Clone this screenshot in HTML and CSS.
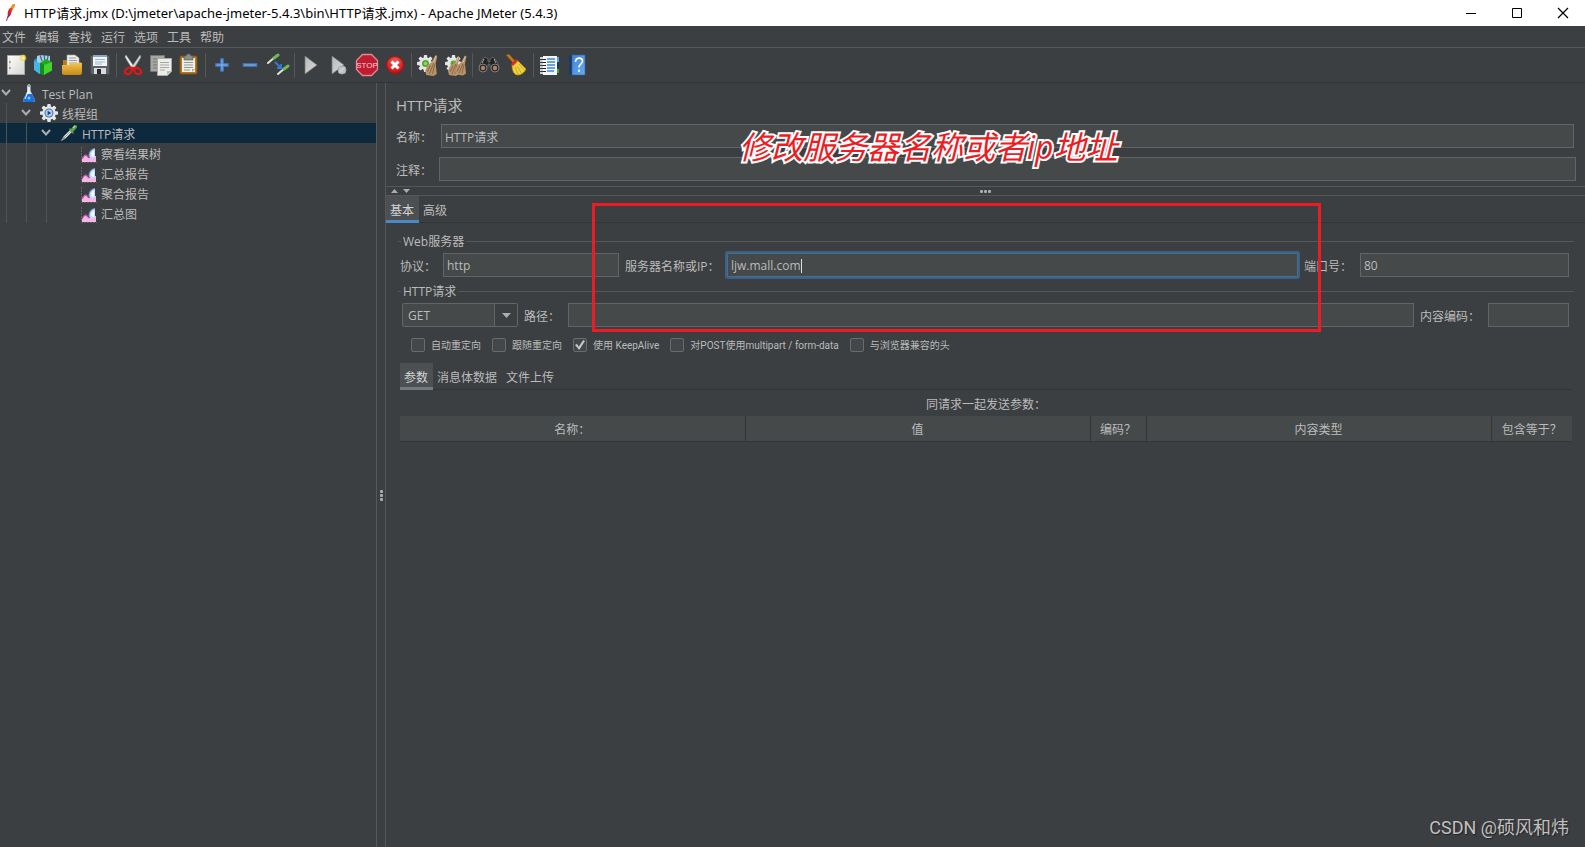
FILE: index.html
```html
<!DOCTYPE html>
<html lang="zh-CN">
<head>
<meta charset="utf-8">
<title>Apache JMeter (5.4.3)</title>
<link rel="stylesheet" href="styles.css">
</head>
<body>
<svg class="defs" aria-hidden="true">
  <defs>
    <linearGradient id="gFolder" x1="0" y1="0" x2="0" y2="1"><stop offset="0" stop-color="#f3c252"/><stop offset="1" stop-color="#c88a16"/></linearGradient>
    <linearGradient id="gPaper" x1="0" y1="0" x2="1" y2="1"><stop offset="0" stop-color="#ffffff"/><stop offset="1" stop-color="#d4d4d0"/></linearGradient>
    <linearGradient id="gPlay" x1="0" y1="0" x2="1" y2="1"><stop offset="0" stop-color="#b9b9b9"/><stop offset="1" stop-color="#d9d9d9"/></linearGradient>
    <linearGradient id="gBook" x1="0" y1="0" x2="1" y2="1"><stop offset="0" stop-color="#3f82d4"/><stop offset="1" stop-color="#6aabf0"/></linearGradient>
    <radialGradient id="gRed" cx=".5" cy=".3" r=".7"><stop offset="0" stop-color="#f46060"/><stop offset="1" stop-color="#c40a0a"/></radialGradient>
    <radialGradient id="gSun"><stop offset="0" stop-color="#fffbd0"/><stop offset=".5" stop-color="#f2dc50"/><stop offset="1" stop-color="#f2dc50" stop-opacity="0"/></radialGradient>
    <symbol id="gear" viewBox="0 0 20 20">
      <g fill="#e4e6e8"><circle cx="10" cy="10" r="7.500"/><rect x="8" y="0" width="4" height="20" rx="1"/><rect x="0" y="8" width="20" height="4" rx="1"/><g transform="rotate(45 10 10)"><rect x="8" y="0" width="4" height="20" rx="1"/><rect x="0" y="8" width="20" height="4" rx="1"/></g></g>
    </symbol>
    <symbol id="brush" viewBox="0 0 12 20">
      <path d="M10 0l1.500 1-1.500 7 1 10-3 2-7-1-1-4 2-5 4-3z" fill="#b8936a"/><path d="M8 8l-4 10M9 9l-2 9M5 10l-3 6" stroke="#7d5e3c" stroke-width=".8" fill="none"/><path d="M10 1l-2 6" stroke="#dcbf90"/>
    </symbol>
    <symbol id="chart" viewBox="0 0 18 18">
      <path d="M1.500 1v15.500H17" fill="none" stroke="#606068" stroke-dasharray="2 1"/><path d="M2 16v-3l2-3 2-1 3 3 3-2h4v6z" fill="#f5b6e6"/><path d="M2 13l2-3 2-1 3 3" fill="none" stroke="#c457aa" stroke-width="1.200"/><path d="M9 10c0-4 2-7 6-7.500V12c-3 1-5 0-6-2z" fill="#c3daf8"/><path d="M9 10c0-4 2-7 6-7.500" fill="none" stroke="#6b92ca"/><path d="M11 9c0-2 1-4 3-4v6c-1 0-3-1-3-2z" fill="#f4f9ff"/>
    </symbol>
    <symbol id="chevron" viewBox="0 0 12 12"><path d="M2 3l4 4.500 4-4.500" fill="none" stroke="#adadad" stroke-width="2"/></symbol>
  </defs>
</svg>

<header class="titlebar">
  <svg class="feather" viewBox="0 0 20 20"><path d="M14 2c2 0 1 2 0 4l-2 2-2-1c1-3 2-5 4-5z" fill="#f09028"/><path d="M10 6l2.500 1-2 6-2.500 1c-1-3 0-6 2-8z" fill="#d02030"/><path d="M10.500 6l2 1-1 3-2-1z" fill="#e04428"/><path d="M8 12l2.500 1-2 2.500-1 .5z" fill="#8a2470"/><path d="M8 14l-1.500 5" stroke="#a03060" fill="none"/></svg>
  <h1 class="title">HTTP请求.jmx (D:\jmeter\apache-jmeter-5.4.3\bin\HTTP请求.jmx) - Apache JMeter (5.4.3)</h1>
  <div class="window-buttons">
    <button aria-label="最小化"><svg viewBox="0 0 12 12"><path d="M1 6.500h10" stroke="#000"/></svg></button>
    <button aria-label="最大化"><svg viewBox="0 0 12 12"><path d="M1.500 1.500h9v9h-9z" fill="none" stroke="#000"/></svg></button>
    <button aria-label="关闭"><svg viewBox="0 0 12 12"><path d="M1 1l10 10M11 1L1 11" stroke="#000" stroke-width="1.200"/></svg></button>
  </div>
</header>

<nav class="menubar">
  <button>文件</button><button>编辑</button><button>查找</button><button>运行</button><button>选项</button><button>工具</button><button>帮助</button>
</nav>

<div class="toolbar" role="toolbar">
  <button aria-label="新建"><svg viewBox="0 0 24 24"><path d="M3.500 2.500h17v19h-17z" fill="url(#gPaper)" stroke="#a9a9a0"/><path d="M5.500 4v16" stroke="#ddd"/><circle cx="6" cy="9" r=".8" fill="#555"/><circle cx="6" cy="15" r=".8" fill="#555"/><circle cx="19" cy="5" r="4" fill="url(#gSun)"/></svg></button>
  <button aria-label="模板"><svg viewBox="0 0 24 24"><path d="M2 7l4-3 4 1v15l-3 1-5-5z" fill="#2d93cc"/><path d="M5 3l3-1 10 1v7H5z" fill="#a9cfe2"/><path d="M8 2l2 6M12 2l1 6M16 3l-1 6" stroke="#3c6d86" stroke-width="1.200"/><path d="M2 8l6 2v11l-6-4z" fill="#47b5e6"/><path d="M8 10l6-4 6 3v9l-9 4-3-2z" fill="#22a61d"/><path d="M12 12l8-3v8l-8 5z" fill="#45d42f"/><path d="M8 10l4 2v10l-4-2z" fill="#138d16"/></svg></button>
  <button aria-label="打开"><svg viewBox="0 0 24 24"><path d="M3 7h6l1 2h11v12H3z" fill="#b87c14"/><path d="M7 2h8l4 3v10H7z" fill="#eee" stroke="#aaa" stroke-width=".6"/><path d="M9 5h7M9 7.500h8M9 10h8" stroke="#999"/><path d="M2 12h7l1-2h12v9c0 2-1 3-2 3H4c-1 0-2-1-2-2z" fill="url(#gFolder)"/></svg></button>
  <button aria-label="保存"><svg viewBox="0 0 24 24"><path d="M2 2h20v20H4l-2-2z" fill="#44474a"/><path d="M3 3h18v18H4l-1-1z" fill="#5f6367"/><path d="M5 2h14v11H5z" fill="#f1f5f9"/><path d="M5 2h14v2H5z" fill="#8fa7bd"/><path d="M7 6.500h10M7 9h10M7 11h7" stroke="#9ab9d4"/><path d="M6 15h12v6H6z" fill="#d9dbdd"/><path d="M9 16h4v5H9z" fill="#292b2d"/></svg></button>
  <hr>
  <button aria-label="剪切"><svg viewBox="0 0 24 24"><path d="M5 2l9 13-2 2L4 4z" fill="#eee" stroke="#999" stroke-width=".5"/><path d="M19 2l-9 13 2 2 8-13z" fill="#d6d6d6" stroke="#888" stroke-width=".5"/><path d="M11 15c-2-1-6 0-7 3-1 4 5 4 6 1 1-1 1-2 1-4zM13 15c2-1 6 0 7 3 1 4-5 4-6 1-1-1-1-2-1-4z" fill="none" stroke="#dc1818" stroke-width="2.300"/></svg></button>
  <button aria-label="复制"><svg viewBox="0 0 24 24"><path d="M1.500 2.500h14v16h-14z" fill="#a5a7a4" stroke="#777"/><path d="M4 6h9M4 9h9M4 12h7M4 15h7" stroke="#777"/><path d="M8.500 5.500h14v13l-4 4h-10z" fill="#ecece9" stroke="#a9aaa5"/><path d="M11 9.500h9M11 12h9M11 14.500h9M11 17h5" stroke="#a7a7a5"/><path d="M18 22v-4h5z" fill="#bdbdb8"/></svg></button>
  <button aria-label="粘贴"><svg viewBox="0 0 24 24"><rect x="3" y="3" width="17" height="18" rx="1.500" fill="#b4781e" stroke="#805010"/><path d="M5 5h13v14H5z" fill="#eeeeeb"/><path d="M7 9.500h9M7 12h9M7 14.500h9M7 17h6" stroke="#96968f"/><path d="M15 19v-3h3z" fill="#aaa"/><path d="M7 3h2l1-2h3l1 2h2v4H7z" fill="#8b8e88" stroke="#50524f" stroke-width=".6"/></svg></button>
  <hr>
  <button aria-label="展开"><svg viewBox="0 0 24 24"><path d="M11 11V6h2v5h5v2h-5v5h-2v-5H6v-2z" fill="#cfe2fa" stroke="#4381d0" stroke-width="1.500"/></svg></button>
  <button aria-label="折叠"><svg viewBox="0 0 24 24"><path d="M5.500 11h13v2h-13z" fill="#cfe2fa" stroke="#4381d0" stroke-width="1.500"/></svg></button>
  <button aria-label="切换"><svg viewBox="0 0 24 24"><g stroke-linecap="round"><path d="M2 10l7-6" stroke="#e2e2dc" stroke-width="2"/><path d="M8 5l4-3" stroke="#6fb957" stroke-width="3"/><path d="M12 21l7-6" stroke="#e2e2dc" stroke-width="2"/><path d="M18 16l4-3" stroke="#6fb957" stroke-width="3"/></g><path d="M9 9l5 5M15 11v4h-4" stroke="#347bd8" stroke-width="1.800" fill="none"/></svg></button>
  <hr>
  <button aria-label="启动"><svg viewBox="0 0 24 24"><path d="M6 3l12 9-12 9z" fill="url(#gPlay)" stroke="#777" stroke-width=".7"/></svg></button>
  <button aria-label="不停顿开始"><svg viewBox="0 0 24 24"><path d="M5 3l12 9-12 9z" fill="url(#gPlay)" stroke="#777" stroke-width=".7"/><circle cx="15" cy="17" r="4" fill="#c0c2c3" stroke="#a8aaab"/><path d="M12.500 19.500l5-5" stroke="#dedede"/></svg></button>
  <button aria-label="停止"><svg viewBox="0 0 24 24"><path d="M7.500 1.500h9l6 6v9l-6 6h-9l-6-6v-9z" fill="#c01b30" stroke="#dc8c96" stroke-width="1.300"/><text x="12" y="15" class="stop-text">STOP</text></svg></button>
  <button aria-label="关闭"><svg viewBox="0 0 24 24"><circle cx="12" cy="12" r="8.500" fill="url(#gRed)" stroke="#b01010"/><path d="M8.500 8.500l7 7M15.500 8.500l-7 7" stroke="#fff" stroke-width="3"/></svg></button>
  <hr>
  <button aria-label="清除"><svg viewBox="0 0 24 24"><use href="#gear" x="1" y="2" width="17" height="17"/><circle cx="9.500" cy="10.500" r="3.500" fill="#57a82d"/><circle cx="9.500" cy="10.500" r="1.800" fill="#91d365"/><use href="#brush" x="9" y="2" width="13" height="21"/></svg></button>
  <button aria-label="清除全部"><svg viewBox="0 0 24 24"><use href="#gear" x="1" y="2" width="17" height="17"/><circle cx="9.500" cy="10.500" r="3" fill="#57a82d"/><use href="#brush" x="4" y="3" width="12" height="20"/><use href="#brush" x="11" y="2" width="12" height="21"/></svg></button>
  <hr>
  <button aria-label="查找"><svg viewBox="0 0 24 24"><path d="M5 7l3-3 3 2v3h2V6l3-2 3 3 3 7H13v-3h-2v3H2z" fill="#232323" stroke="#777" stroke-width=".7"/><circle cx="6" cy="15" r="4" fill="#292522" stroke="#808080"/><circle cx="18" cy="15" r="4" fill="#292522" stroke="#808080"/><circle cx="6" cy="15" r="2.200" fill="#a98468"/><circle cx="18" cy="15" r="2.200" fill="#a98468"/><path d="M7 6l-2 4M17 6l2 4" stroke="#aaa"/></svg></button>
  <button aria-label="重置查找"><svg viewBox="0 0 24 24"><path d="M1 2l3-1 7 8-2 2z" fill="#c47a22" stroke="#78430c" stroke-width=".6"/><path d="M7 11l5-4 9 9c-2 4-5 6-9 6-4-1-5-6-5-11z" fill="#f3d33c" stroke="#b7920f" stroke-width=".7"/><path d="M6 11l5-5 2 2-5 5z" fill="#db2b23"/><path d="M10 14l3 7M12 13l5 8M14 11l5 6" stroke="#c9a624" fill="none"/></svg></button>
  <hr>
  <button aria-label="函数助手"><svg viewBox="0 0 24 24"><path d="M19 4h2v5h-2z" fill="#4f9ff0"/><path d="M19 10h2v5h-2z" fill="#123b66"/><path d="M19 16h2v4h-2z" fill="#3fa33c"/><path d="M5 3h14v19H5z" fill="#f4f6f8"/><path d="M9 6h8M9 9h8M9 12h8M9 15h8M9 18h7" stroke="#3a88d8" stroke-width="1.300"/><path d="M2 5h4M2 8h4M2 11h4M2 14h4M2 17h4M2 20h4" stroke="#fff" stroke-width="1.500"/><path d="M5 6.500h3M5 9.500h3M5 12.500h3M5 15.500h3M5 18.500h3" stroke="#222"/></svg></button>
  <button aria-label="帮助"><svg viewBox="0 0 24 24"><path d="M3 3l3-1v20H3z" fill="#173b66"/><path d="M6 2h13v20H6z" fill="url(#gBook)" stroke="#2d61a4" stroke-width=".6"/><path d="M9.500 9c0-5 7-5 7-1 0 3-3.500 3-3.500 6.500M13 16.500v2.500" fill="none" stroke="#fff" stroke-width="1.600"/></svg></button>
</div>

<div class="workspace">
  <aside class="tree" role="tree">
    <div class="node" role="treeitem"><svg class="toggle"><use href="#chevron"/></svg><svg class="node-icon" viewBox="0 0 18 18"><path d="M7.500 1h3v6l4 8c1 2 0 3-1 3h-9c-1 0-2-1-1-3l4-8z" fill="#dceafa"/><path d="M6 10h6l3 6c0 1-1 2-2 2H5c-1 0-2-1-2-2z" fill="#1a70e0"/><path d="M8 2v6l-3 7" stroke="#fff" fill="none"/><circle cx="9" cy="14" r="1.500" fill="#7bc4ff"/><path d="M9 0v3" stroke="#9aa" stroke-width="2"/></svg><span>Test Plan</span></div>
    <div class="node" role="treeitem"><i class="guide"></i><svg class="toggle"><use href="#chevron"/></svg><svg class="node-icon" viewBox="0 0 20 20"><use href="#gear" width="20" height="20"/><circle cx="10" cy="10" r="5" fill="#4a76ac"/><circle cx="10" cy="10" r="3.800" fill="#b4cfee"/><path d="M8.500 7.500l4 2.500-4 2.500z" fill="#1e4682"/></svg><span>线程组</span></div>
    <div class="node selected" role="treeitem" aria-selected="true"><i class="guide"></i><i class="guide"></i><svg class="toggle"><use href="#chevron"/></svg><svg class="node-icon" viewBox="0 0 18 18"><path d="M1 17l3-5 7-7 2 2-7 7z" fill="#e8e8e2" stroke="#777" stroke-width=".7"/><path d="M3 15l8-8" stroke="#999"/><path d="M9 5l1-1 1 1 3-3.500c1-1 4 0 3 2L13 8l1 1-1 1z" fill="#5f9e48"/><path d="M13 4l2-2" stroke="#a9da8e" stroke-width="1.500"/></svg><span>HTTP请求</span></div>
    <div class="node" role="treeitem"><i class="guide"></i><i class="guide"></i><i class="guide"></i><i class="spacer"></i><svg class="node-icon"><use href="#chart"/></svg><span>察看结果树</span></div>
    <div class="node" role="treeitem"><i class="guide"></i><i class="guide"></i><i class="guide"></i><i class="spacer"></i><svg class="node-icon"><use href="#chart"/></svg><span>汇总报告</span></div>
    <div class="node" role="treeitem"><i class="guide"></i><i class="guide"></i><i class="guide"></i><i class="spacer"></i><svg class="node-icon"><use href="#chart"/></svg><span>聚合报告</span></div>
    <div class="node" role="treeitem"><i class="guide"></i><i class="guide"></i><i class="guide"></i><i class="spacer"></i><svg class="node-icon"><use href="#chart"/></svg><span>汇总图</span></div>
  </aside>

  <div class="splitter"><i></i><i></i><i></i></div>

  <main class="editor">
    <h2 class="heading">HTTP请求</h2>
    <div class="field name-field"><label for="name">名称：</label><input id="name" type="text" value="HTTP请求"></div>
    <div class="field comment-field"><label for="comment">注释：</label><input id="comment" type="text"></div>

    <div class="divider">
      <svg class="arrows" viewBox="0 0 20 8"><path d="M1 6l3.500-4L8 6zM13 2h7l-3.500 4z" fill="#adadad"/></svg>
      <span class="dots"><i></i><i></i><i></i></span>
    </div>

    <div class="tabs main-tabs" role="tablist"><button role="tab" aria-selected="true">基本</button><button role="tab">高级</button></div>

    <fieldset>
      <legend>Web服务器</legend>
      <div class="server-row">
        <label for="protocol">协议：</label><input id="protocol" type="text" value="http">
        <label class="inner" for="server">服务器名称或IP：</label><div class="caret-box"><input id="server" class="focused" type="text" value="ljw.mall.com"><span class="caret-line"><span>ljw.mall.com</span></span></div>
        <label class="inner" for="port">端口号：</label><input id="port" type="text" value="80">
      </div>
    </fieldset>
    <fieldset>
      <legend>HTTP请求</legend>
      <div class="path-row">
        <div class="combo"><select aria-label="方法"><option>GET</option></select><span class="combo-arrow"></span></div>
        <label class="inner" for="path">路径：</label><input id="path" type="text">
        <label class="inner" for="encoding">内容编码：</label><input id="encoding" type="text">
      </div>
    </fieldset>

    <div class="checks">
      <label><input type="checkbox">自动重定向</label>
      <label><input type="checkbox">跟随重定向</label>
      <label><input type="checkbox" checked>使用 KeepAlive</label>
      <label><input type="checkbox">对POST使用multipart / form-data</label>
      <label><input type="checkbox">与浏览器兼容的头</label>
    </div>

    <section class="params">
      <div class="tabs" role="tablist"><button role="tab" aria-selected="true">参数</button><button role="tab">消息体数据</button><button role="tab">文件上传</button></div>
      <table>
        <caption>同请求一起发送参数：</caption>
        <colgroup><col class="wide"><col class="wide"><col class="encode"><col class="wide"><col class="include"></colgroup>
        <thead><tr><th>名称：</th><th>值</th><th>编码？</th><th>内容类型</th><th>包含等于？</th></tr></thead>
      </table>
    </section>

    <div class="highlight-box"></div>
    <p class="annotation">修改服务器名称或者ip地址</p>
    <p class="watermark">CSDN @硕风和炜</p>
  </main>
</div>
</body>
</html>
```
FILE: styles.css
```css
* { box-sizing: border-box; }

body {
  margin: 0;
  height: 100vh;
  display: flex;
  flex-direction: column;
  overflow: hidden;
  background: #3c3f41;
  color: #bbbbbb;
  font: 12px/16px "Open Sans", "Noto Sans CJK SC", sans-serif;
}

button, input, select { font: inherit; color: inherit; }
button { border: 0; padding: 0; background: none; }
.defs { position: absolute; width: 0; height: 0; }

/* Window title */
.titlebar { display: flex; align-items: center; height: 26px; flex: none; background: #fff; color: #000; }
.feather { width: 20px; height: 20px; margin-bottom: 3px; }
.title { flex: 1; margin: 0 0 0 4px; font-family: "Noto Sans", "Noto Sans CJK SC", sans-serif; font-size: 13px; font-weight: 400; }
.window-buttons { display: flex; }
.window-buttons button { width: 46px; height: 24px; padding-left: 2px; display: flex; align-items: center; justify-content: center; }
.window-buttons svg { width: 12px; height: 12px; }

/* Menu and toolbar */
.menubar { display: flex; gap: 9px; flex: none; height: 22px; padding: 2px 0 0 2px; border-bottom: 1px solid #555758; }
.toolbar { display: flex; align-items: center; flex: none; height: 35px; padding-left: 2px; border-bottom: 1px solid #323436; }
.toolbar button { width: 28px; height: 28px; display: flex; align-items: center; justify-content: center; }
.toolbar svg { width: 24px; height: 24px; }
.toolbar hr { width: 1px; height: 24px; margin: 0 2px; border: 0; background: #555758; }
.stop-text { font: 8px "Liberation Sans", sans-serif; fill: #f5d4d8; text-anchor: middle; }

.workspace { display: flex; flex: 1; min-height: 0; }

/* Test plan tree */
.tree { flex: none; width: 377px; border-right: 1px solid #5a5856; }
.node { display: flex; align-items: center; height: 20px; }
.node.selected { background: #0d293e; }
.node span { padding-top: 3px; }
.guide { width: 20px; height: 20px; padding-left: 6px; }
.guide::before { content: ""; display: block; width: 1px; height: 20px; background: #515455; }
.toggle { width: 12px; height: 12px; margin: 0 8px 0 0; }
.spacer { width: 20px; }
.node-icon { width: 18px; height: 18px; margin-right: 4px; }
.spacer + .node-icon { margin: 3px 3px 0 0; }

.splitter { flex: none; width: 9px; display: flex; flex-direction: column; align-items: center; justify-content: center; gap: 1px; padding: 60px 0 0; border-right: 1px solid #555758; }
.splitter i, .dots i { width: 3px; height: 3px; border-radius: 1px; background: #adadad; }

/* Editor */
.editor { flex: 1; min-width: 0; position: relative; }
.heading { margin: 0; padding: 11px 10px 8px; font-size: 15px; line-height: 22px; font-weight: 400; }
input[type="text"] { width: 100%; min-width: 0; height: 24px; padding: 1px 4px 0 3px; border: 1px solid #646464; background: #45494a; outline: 0; }
.field { display: flex; align-items: center; padding-left: 10px; }
.field label { flex: none; padding-top: 3px; }
.name-field { padding-right: 11px; margin-bottom: 9px; }
.name-field label { width: 45px; }
.comment-field { padding-right: 9px; margin-bottom: 5px; }
.comment-field label { width: 43px; }

.divider { display: grid; grid-template-columns: 1fr auto 1fr; align-items: center; height: 10px; border: solid #555758; border-width: 1px 0; }
.arrows { width: 20px; height: 8px; margin-left: 4px; }
.dots { display: flex; gap: 1px; }

.tabs { display: flex; height: 27px; border-bottom: 1px solid #323436; }
.tabs button { height: 27px; padding: 5px 5px 0 4px; border-bottom: 3px solid transparent; }
.tabs button[aria-selected="true"] { background: #4c5052; border-bottom-color: #747a80; color: #d4d4d4; }
.main-tabs { margin-bottom: 10px; }
.main-tabs button[aria-selected="true"] { border-bottom-color: #4a88c7; }

fieldset { min-width: 0; margin: 0 11px 6px 12px; padding: 4px 5px 0 2px; border: 0; border-top: 1px solid #555758; }
legend { margin-left: 1px; padding: 2px 2px 0; line-height: 14px; }
.server-row { display: grid; grid-template-columns: 43px 176fr 108px 571fr 62px 209fr; align-items: center; }
.path-row { display: grid; grid-template-columns: 116px 50px 1fr 74px 81px; align-items: center; padding-left: 2px; }
fieldset label { padding-top: 3px; white-space: nowrap; }
.inner { padding-left: 6px; }
input.focused { border-color: #466d94; box-shadow: 0 0 0 2px #3d6185; border-radius: 1px; }
.caret-box { position: relative; }
.caret-line { position: absolute; left: 4px; top: 6px; height: 14px; border-right: 1px solid #ddd; pointer-events: none; }
.caret-line span { visibility: hidden; }

.combo { position: relative; }
.combo select { display: block; appearance: none; width: 100%; height: 24px; padding: 1px 5px 0; border: 1px solid #646464; border-radius: 2px; background: #45494a; }
.combo-arrow { position: absolute; right: 1px; top: 1px; width: 23px; height: 22px; border-left: 1px solid #646464; background: #3c3f41; pointer-events: none; }
.combo-arrow::after { content: ""; display: block; width: 9px; height: 5px; margin: 9px 0 0 7px; background: #adadad; clip-path: polygon(0 0, 100% 0, 50% 100%); }

.checks { display: flex; gap: 11px; padding: 5px 0 0 25px; font: 10px/14px Roboto, "Noto Sans CJK SC", sans-serif; }
.checks label { display: flex; align-items: center; gap: 6px; white-space: nowrap; }
.checks input { appearance: none; width: 14px; height: 14px; margin: 0 0 2px; border: 1px solid #6b6b6b; border-radius: 2px; background: #43474a; }
.checks input:checked::after { content: ""; display: block; width: 10px; height: 10px; margin: 1px; background: #c4c4c4; clip-path: polygon(0 50%, 18% 38%, 38% 65%, 82% 0, 100% 10%, 42% 100%); }

.params { margin: 9px 13px 0 14px; }
table { width: 100%; table-layout: fixed; border-collapse: collapse; }
caption { height: 26px; padding: 7px 0 3px; }
.encode { width: 56px; }
.include { width: 81px; }
th { height: 25px; padding: 4px 0 0; font-weight: 400; background: #45494a; border-bottom: 1px solid #323436; }
th + th { border-left: 1px solid #323436; }

/* Marks drawn over the window */
.highlight-box { position: absolute; left: 206px; top: 120px; width: 729px; height: 129px; border: 3px solid #ed1c24; }
.annotation {
  position: absolute; left: 353px; top: 41px; margin: 0;
  font: italic 400 32px/46px "Open Sans", "Noto Sans CJK SC", sans-serif;
  color: #ed1c24;
  white-space: nowrap;
  -webkit-text-stroke: 4px #fff;
  paint-order: stroke fill;
}
.watermark { position: absolute; right: 16px; bottom: 7px; margin: 0; font: 18px/24px Roboto, "Noto Sans CJK SC", sans-serif; color: #c0c0c0; text-shadow: 1px 1px 1px #222; }
```
